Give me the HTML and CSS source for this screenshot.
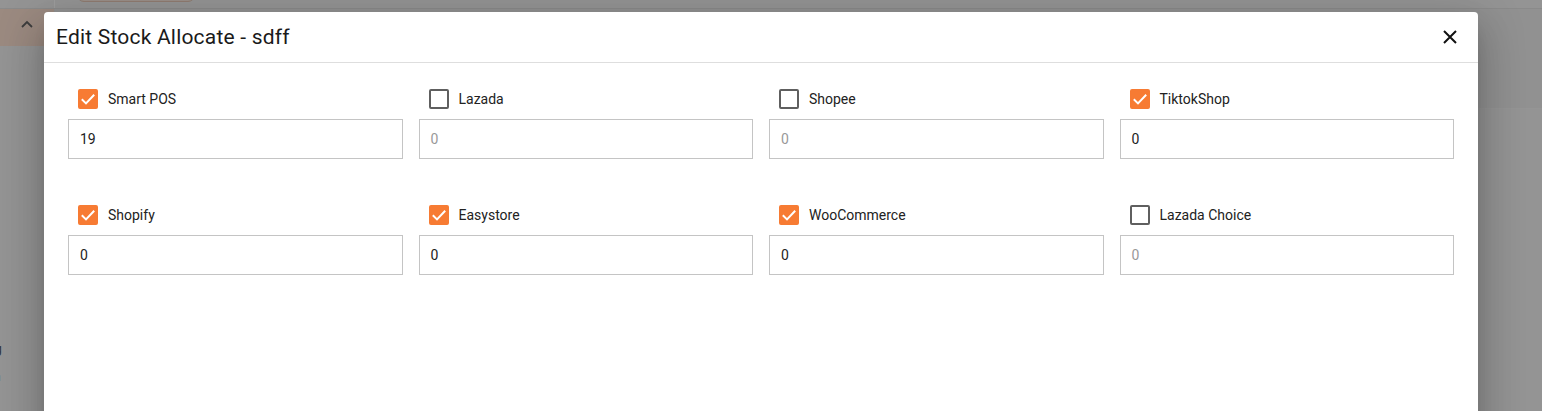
FILE: index.html
```html
<!DOCTYPE html>
<html>
<head>
<meta charset="utf-8">
<link rel="stylesheet" href="styles.css">
</head>
<body>
<div class="page">
  <div class="topbar">
    <div class="top-left"></div>
    <div class="top-main"><span class="pill"></span></div>
  </div>
  <div class="under">
    <aside class="sidebar">
      <div class="side-active">
        <svg width="12" height="8" viewBox="0 0 12 8"><path d="M1 7 L6 2 L11 7" fill="none" stroke="#3d3d3d" stroke-width="1.8"/></svg>
      </div>
      <div class="side-frag f1">Setting</div>
      <div class="side-frag f2">Main</div>
    </aside>
    <div class="content">
      <div class="content-top"></div>
    </div>
  </div>

  <div class="dialog">
    <div class="dialog-head">
      <h2 class="dialog-title">Edit Stock Allocate - sdff</h2>
      <button class="close" aria-label="close">
        <svg width="14" height="14" viewBox="0 0 14 14"><path d="M1 1 L13 13 M13 1 L1 13" stroke="#111" stroke-width="2" fill="none"/></svg>
      </button>
    </div>
    <div class="dialog-body">
      <div class="field">
        <label class="check"><span class="box on"><svg viewBox="0 0 20 20"><path d="M3.8 10.3 L8 14.4 L16.2 5.8" fill="none" stroke="#fff" stroke-width="2"/></svg></span>Smart POS</label>
        <div class="input">19</div>
      </div>
      <div class="field">
        <label class="check"><span class="box"></span>Lazada</label>
        <div class="input off">0</div>
      </div>
      <div class="field">
        <label class="check"><span class="box"></span>Shopee</label>
        <div class="input off">0</div>
      </div>
      <div class="field">
        <label class="check"><span class="box on"><svg viewBox="0 0 20 20"><path d="M3.8 10.3 L8 14.4 L16.2 5.8" fill="none" stroke="#fff" stroke-width="2"/></svg></span>TiktokShop</label>
        <div class="input">0</div>
      </div>
      <div class="field">
        <label class="check"><span class="box on"><svg viewBox="0 0 20 20"><path d="M3.8 10.3 L8 14.4 L16.2 5.8" fill="none" stroke="#fff" stroke-width="2"/></svg></span>Shopify</label>
        <div class="input">0</div>
      </div>
      <div class="field">
        <label class="check"><span class="box on"><svg viewBox="0 0 20 20"><path d="M3.8 10.3 L8 14.4 L16.2 5.8" fill="none" stroke="#fff" stroke-width="2"/></svg></span>Easystore</label>
        <div class="input">0</div>
      </div>
      <div class="field">
        <label class="check"><span class="box on"><svg viewBox="0 0 20 20"><path d="M3.8 10.3 L8 14.4 L16.2 5.8" fill="none" stroke="#fff" stroke-width="2"/></svg></span>WooCommerce</label>
        <div class="input">0</div>
      </div>
      <div class="field">
        <label class="check"><span class="box"></span>Lazada Choice</label>
        <div class="input off">0</div>
      </div>
    </div>
  </div>
</div>
</body>
</html>
```

FILE: styles.css
```css
* { box-sizing: border-box; }
html, body { margin: 0; padding: 0; }
body {
  width: 1542px;
  height: 411px;
  overflow: hidden;
  background: #949494;
  font-family: Roboto, "Liberation Sans", Arial, sans-serif;
}
.page { position: relative; width: 1542px; height: 411px; overflow: hidden; }

.topbar { display: flex; height: 9px; border-bottom: 1px solid #8a8a8a; }
.top-left { width: 55px; border-right: 1px solid #9d9d9d; }
.top-main { flex: 1; position: relative; }
.pill {
  display: block;
  margin-left: 22px;
  margin-top: -12px;
  width: 118px;
  height: 14px;
  border: 1px solid #8e7b70;
  border-radius: 8px;
  background: #9a8f88;
}

.under { display: flex; height: 402px; }
.sidebar { width: 55px; border-right: 1px solid #8f8f8f; position: relative; }
.side-active {
  height: 37px;
  background: #9b8a80;
  display: flex;
  justify-content: center;
  padding-top: 11px;
}
.side-active svg { display: block; }
.side-frag {
  position: absolute;
  font-size: 13px;
  color: #333333;
  white-space: nowrap;
}
.f1 { top: 332px; left: -39px; }
.f2 { top: 360px; left: -28px; }
.content { flex: 1; }
.content-top { height: 100px; background: #919191; border-bottom: 1px solid #959595; }

.dialog {
  position: absolute;
  left: 44px;
  top: 12px;
  width: 1434px;
  height: 440px;
  background: #fff;
  border-radius: 4px;
  box-shadow: 0 11px 15px -7px rgba(0,0,0,.2), 0 24px 38px 3px rgba(0,0,0,.14), 0 9px 46px 8px rgba(0,0,0,.12);
}
.dialog-head {
  height: 51px;
  border-bottom: 1px solid #dedede;
  display: flex;
  align-items: center;
  justify-content: space-between;
  padding: 0 20px 0 12px;
}
.dialog-title {
  margin: 0;
  font-size: 21px;
  font-weight: 400;
  color: #1a1a1a;
  letter-spacing: 0.2px;
}
.close {
  border: 0;
  background: none;
  padding: 0;
  width: 16px;
  height: 16px;
  display: flex;
  align-items: center;
  justify-content: center;
  cursor: pointer;
}
.close svg { display: block; }

.dialog-body {
  padding: 26px 24px;
  display: grid;
  grid-template-columns: repeat(4, 1fr);
  column-gap: 16px;
  row-gap: 46px;
}
.field { display: flex; flex-direction: column; }
.check {
  display: flex;
  align-items: center;
  height: 20px;
  padding-left: 10px;
  font-size: 14px;
  color: #222;
}
.box {
  width: 20px;
  height: 20px;
  border: 2px solid #5f5f5f;
  border-radius: 2px;
  margin-right: 10px;
  flex: none;
}
.box.on { background: #f77b33; border-color: #f77b33; position: relative; }
.box.on svg { position: absolute; left: -2px; top: -2px; width: 20px; height: 20px; }
.input {
  margin-top: 10px;
  height: 40px;
  border: 1px solid #c4c4c4;
  padding-left: 11px;
  display: flex;
  align-items: center;
  font-size: 14px;
  color: #222;
}
.input.off { color: #999; }
```
